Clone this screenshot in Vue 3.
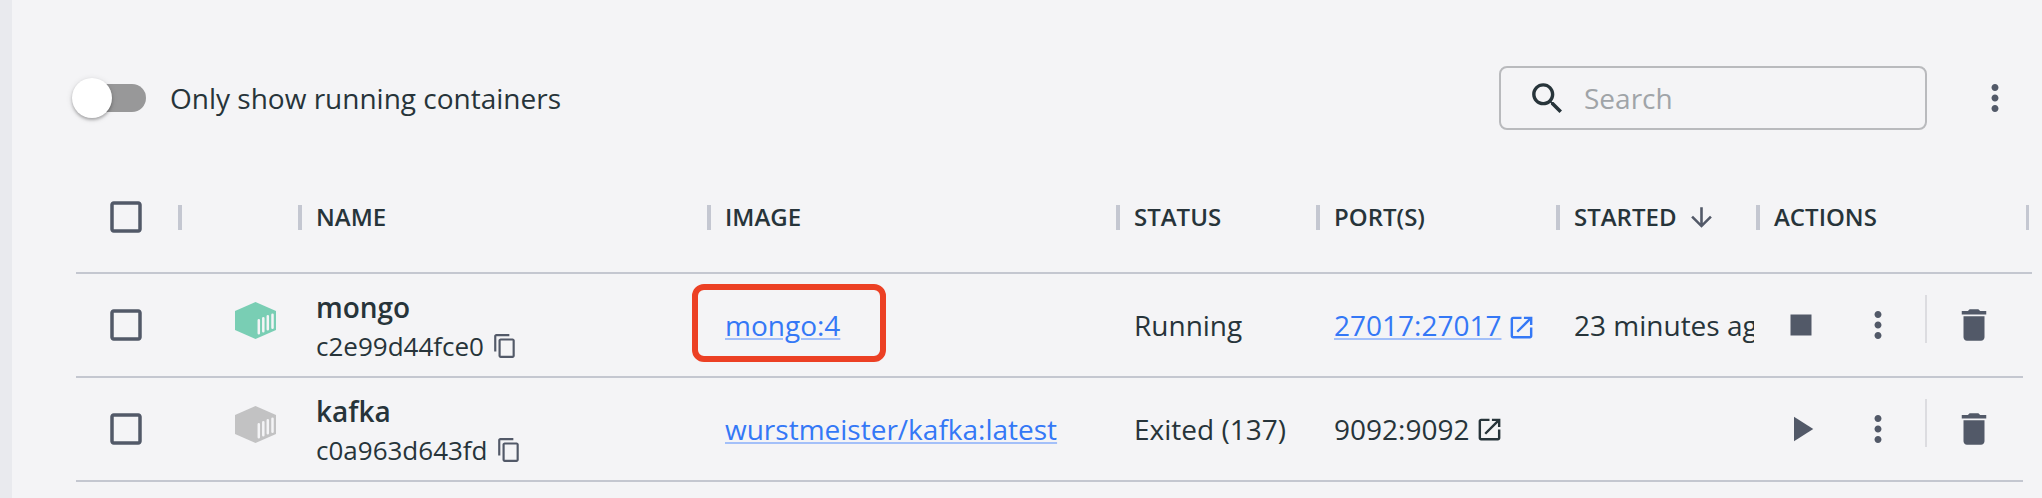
<script setup>
const columns = [
  { key: 'icon', label: '' },
  { key: 'name', label: 'NAME' },
  { key: 'image', label: 'IMAGE' },
  { key: 'status', label: 'STATUS' },
  { key: 'ports', label: 'PORT(S)' },
  { key: 'started', label: 'STARTED', sorted: true },
  { key: 'actions', label: 'ACTIONS' },
]
const containers = [
  { name: 'mongo', id: 'c2e99d44fce0', image: 'mongo:4', marked: true, running: true, status: 'Running', port: '27017:27017', started: '23 minutes ago' },
  { name: 'kafka', id: 'c0a963d643fd', image: 'wurstmeister/kafka:latest', marked: false, running: false, status: 'Exited (137)', port: '9092:9092', started: '' },
]
const box = 'M19 5v14H5V5h14m0-2H5c-1.1 0-2 .9-2 2v14c0 1.1.9 2 2 2h14c1.1 0 2-.9 2-2V5c0-1.1-.9-2-2-2z'
const more = 'M12 8c1.1 0 2-.9 2-2s-.9-2-2-2-2 .9-2 2 .9 2 2 2zm0 2c-1.1 0-2 .9-2 2s.9 2 2 2 2-.9 2-2-.9-2-2-2zm0 6c-1.1 0-2 .9-2 2s.9 2 2 2 2-.9 2-2-.9-2-2-2z'
</script>

<template>
  <div class="page">
    <aside class="rail"></aside>
    <main class="main">
      <div class="toolbar">
        <div class="switch"><span class="thumb"></span></div>
        <span class="switch-label">Only show running containers</span>
        <div class="search">
          <svg class="search-icon" viewBox="0 0 24 24"><path d="M15.5 14h-.79l-.28-.27C15.41 12.59 16 11.11 16 9.5 16 5.91 13.09 3 9.5 3S3 5.91 3 9.5 5.91 16 9.5 16c1.61 0 3.09-.59 4.23-1.57l.27.28v.79l5 4.99L20.49 19l-4.99-5zm-6 0C7.01 14 5 11.99 5 9.5S7.01 5 9.5 5 14 7.01 14 9.5 11.99 14 9.5 14z" /></svg>
          <span class="placeholder">Search</span>
        </div>
        <svg class="icon menu" viewBox="0 0 24 24"><path :d="more" /></svg>
      </div>

      <div class="grid head">
        <div class="check"><svg class="icon" viewBox="0 0 24 24"><path :d="box" /></svg></div>
        <div v-for="c in columns" :key="c.key" class="th">
          <span class="th-label">{{ c.label }}</span>
          <svg v-if="c.sorted" class="arrow" viewBox="0 0 24 24"><path d="M20 12l-1.41-1.41L13 16.17V4h-2v12.17l-5.58-5.59L4 12l8 8 8-8z" /></svg>
        </div>
      </div>

      <div v-for="r in containers" :key="r.id" class="grid row">
        <div class="check"><svg class="icon" viewBox="0 0 24 24"><path :d="box" /></svg></div>
        <div class="cube-cell">
          <svg class="cube" :class="{ on: r.running }" viewBox="0 0 41 37">
            <path d="M20.5 0 41 9v19L20.5 37 0 28V9z" />
            <path class="slats" d="M23.8 18.3v13M28.3 16.2v13M32.8 14.3v13M37.5 12.8v13" />
          </svg>
        </div>
        <div class="cell name">
          <strong>{{ r.name }}</strong>
          <span class="id">{{ r.id }}<svg class="copy" viewBox="0 0 24 24"><path d="M16 1H4c-1.1 0-2 .9-2 2v14h2V3h12V1zm3 4H8c-1.1 0-2 .9-2 2v14c0 1.1.9 2 2 2h11c1.1 0 2-.9 2-2V7c0-1.1-.9-2-2-2zm0 16H8V7h11v14z" /></svg></span>
        </div>
        <div class="cell image"><a class="link">{{ r.image }}</a><i v-if="r.marked" class="mark"></i></div>
        <div class="cell">{{ r.status }}</div>
        <div class="cell port" :class="{ live: r.running }">
          <span :class="{ link: r.running }">{{ r.port }}</span>
          <svg class="open" viewBox="0 0 24 24"><path d="M19 19H5V5h7V3H5c-1.11 0-2 .9-2 2v14c0 1.1.89 2 2 2h14c1.1 0 2-.9 2-2v-7h-2v7zM14 3v2h3.59l-9.83 9.83 1.41 1.41L19 6.41V10h2V3h-7z" /></svg>
        </div>
        <div class="cell started"><span>{{ r.started }}</span></div>
        <div class="actions">
          <svg class="icon" viewBox="0 0 24 24"><path :d="r.running ? 'M6 6h12v12H6z' : 'M8 5v14l11-7z'" /></svg>
          <svg class="icon dots" viewBox="0 0 24 24"><path :d="more" /></svg>
          <span class="divider"></span>
          <svg class="icon" viewBox="0 0 24 24"><path d="M6 19c0 1.1.9 2 2 2h8c1.1 0 2-.9 2-2V7H6v12zM19 4h-3.5l-1-1h-5l-1 1H5v2h14V4z" /></svg>
        </div>
      </div>
    </main>
  </div>
</template>

<style>
body { background: #f4f4f6; }
</style>

<style scoped>
.page {
  display: flex;
  width: 2042px;
  height: 498px;
  overflow: hidden;
  background: #f4f4f6;
  color: #27343a;
  font: 28px/38px "Open Sans", "Noto Sans", sans-serif;
}
.page * { box-sizing: border-box; }
svg { display: block; flex: none; fill: currentColor; }
.rail { width: 12px; flex: none; background: #e9eaee; }
.main { flex: 1; min-width: 0; padding: 66px 0 0 64px; }
.toolbar { display: flex; align-items: center; height: 64px; }
.switch {
  display: flex;
  align-items: center;
  width: 68px;
  height: 28px;
  margin-left: 2px;
  border-radius: 14px;
  background: #989899;
}
.thumb {
  flex: none;
  width: 40px;
  height: 40px;
  margin-left: -6px;
  border-radius: 50%;
  background: #fff;
  box-shadow: 0 2px 3px rgba(0, 0, 0, .25), 0 1px 6px rgba(0, 0, 0, .12);
}
.switch-label { margin-left: 24px; }
.search {
  display: flex;
  align-items: center;
  width: 428px;
  height: 64px;
  margin-left: auto;
  padding-left: 26px;
  border: 2px solid #b9babd;
  border-radius: 8px;
}
.search-icon { width: 41px; height: 41px; }
.placeholder { margin-left: 16px; color: #a0a4a8; }
.icon { width: 42px; height: 42px; color: #525968; }
.menu { margin: 0 26px 0 47px; }

.grid {
  display: grid;
  grid-template-columns: 104px 120px 409px 409px 200px 240px 200px 1fr;
  border-bottom: 2px solid #c4c7d0;
}
.head { width: 1956px; height: 144px; padding: 31px 4px 0 0; align-items: start; }
.row { width: 1947px; height: 104px; align-items: center; }
.check { display: flex; align-items: center; height: 112px; padding-left: 29px; }
.row .check { height: 102px; }
.th {
  position: relative;
  display: flex;
  align-items: center;
  height: 112px;
  padding-left: 16px;
  font-size: 24px;
  font-weight: 600;
}
.th::before, .th:last-child::after {
  content: "";
  position: absolute;
  top: 44px;
  left: -2px;
  width: 3.5px;
  height: 25px;
  background: #c4c7d1;
}
.th:last-child::after { left: auto; right: -1px; }
.arrow { width: 31px; height: 31px; margin-left: 9px; color: #525968; }
.cell { position: relative; padding-left: 16px; white-space: nowrap; }
.cube-cell { display: flex; padding: 0 0 10px 55px; }
.cube { width: 41px; height: 37px; color: #c2c2c3; }
.cube.on { color: #79ceb4; }
.slats { fill: none; stroke: #f4f4f6; stroke-width: 2.5; stroke-linecap: round; }
.name { display: flex; flex-direction: column; padding-top: 2px; }
.name strong { font-weight: 600; line-height: 40px; }
.id { display: flex; align-items: center; font-size: 26px; line-height: 38px; }
.copy { width: 26px; height: 26px; margin-left: 8px; color: #525968; }
.link {
  color: #3478f6;
  text-decoration: underline;
  text-decoration-color: #a3c0f9;
  text-decoration-thickness: 2px;
  text-underline-offset: 2px;
}
/* highlight frame laid over the image name */
.mark {
  position: absolute;
  left: -17px;
  top: -22px;
  width: 194px;
  height: 78px;
  border: 6px solid #ec4024;
  border-radius: 12px;
}
.port { display: flex; align-items: center; }
.open { width: 29px; height: 29px; margin-left: 6px; }
.live .open { color: #3478f6; margin-top: 5px; }
.started span { display: block; width: 180px; overflow: hidden; }
.actions { display: flex; align-items: center; height: 102px; padding: 0 0 0 22px; }
.dots { margin-left: 35px; }
.divider { width: 2px; height: 48px; margin: 0 26px 12px 26px; background: #dcdce0; }
</style>
